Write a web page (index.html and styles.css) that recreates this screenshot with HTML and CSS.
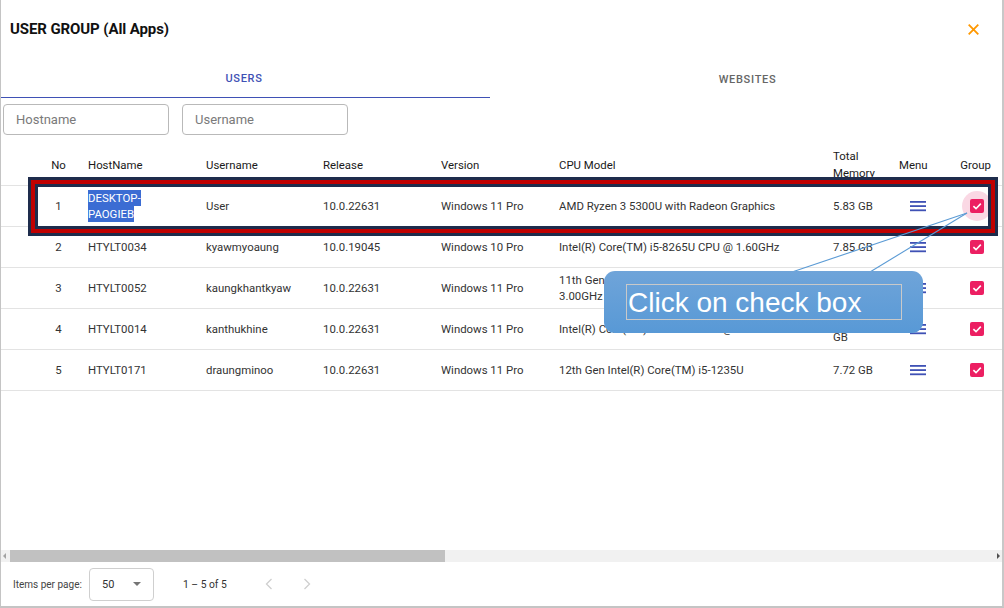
FILE: index.html
```html
<!DOCTYPE html>
<html lang="en">
<head>
<meta charset="utf-8">
<title>User Group</title>
<link rel="stylesheet" href="styles.css">
</head>
<body>
<div class="dialog">
  <header class="titlebar">
    <h1 class="title">USER GROUP (All Apps)</h1>
    <svg class="close" width="11" height="11" viewBox="0 0 11 11"><path d="M0.7 0.7L10.3 10.3M10.3 0.7L0.7 10.3"/></svg>
  </header>

  <nav class="tabs">
    <div class="tab tab-active">USERS</div>
    <div class="tab">WEBSITES</div>
  </nav>

  <div class="filters">
    <input class="field" placeholder="Hostname">
    <input class="field" placeholder="Username">
  </div>

  <div class="table">
    <div class="thead">
      <div class="c-no">No</div>
      <div class="c-host">HostName</div>
      <div>Username</div>
      <div>Release</div>
      <div>Version</div>
      <div>CPU Model</div>
      <div class="c-mem">Total Memory</div>
      <div class="c-menu-h">Menu</div>
      <div class="c-group-h">Group</div>
    </div>

    <div class="row">
      <div class="c-no">1</div>
      <div class="c-host"><span class="sel">DESKTOP-PAOGIEB</span></div>
      <div>User</div>
      <div>10.0.22631</div>
      <div>Windows 11 Pro</div>
      <div class="c-cpu">AMD Ryzen 3 5300U with Radeon Graphics</div>
      <div class="c-mem">5.83 GB</div>
      <div class="c-menu"><svg class="burger" width="16" height="12" viewBox="0 0 16 12"><rect x="0" y="1" width="16" height="1.8"/><rect x="0" y="5.2" width="16" height="1.8"/><rect x="0" y="9.4" width="16" height="1.8"/></svg></div>
      <div class="c-group"><span class="cbwrap focus"><span class="cb"><svg width="14" height="14" viewBox="0 0 14 14"><polyline points="3.4,7.2 6,9.7 10.8,4.6"/></svg></span></span></div>
    </div>

    <div class="row">
      <div class="c-no">2</div>
      <div class="c-host">HTYLT0034</div>
      <div>kyawmyoaung</div>
      <div>10.0.19045</div>
      <div>Windows 10 Pro</div>
      <div class="c-cpu">Intel(R) Core(TM) i5-8265U CPU @ 1.60GHz</div>
      <div class="c-mem">7.85 GB</div>
      <div class="c-menu"><svg class="burger" width="16" height="12" viewBox="0 0 16 12"><rect x="0" y="1" width="16" height="1.8"/><rect x="0" y="5.2" width="16" height="1.8"/><rect x="0" y="9.4" width="16" height="1.8"/></svg></div>
      <div class="c-group"><span class="cbwrap"><span class="cb"><svg width="14" height="14" viewBox="0 0 14 14"><polyline points="3.4,7.2 6,9.7 10.8,4.6"/></svg></span></span></div>
    </div>

    <div class="row">
      <div class="c-no">3</div>
      <div class="c-host">HTYLT0052</div>
      <div>kaungkhantkyaw</div>
      <div>10.0.22631</div>
      <div>Windows 11 Pro</div>
      <div class="c-cpu">11th Gen Intel(R) Core(TM) i5-1135G7 @ 3.00GHz</div>
      <div class="c-mem">7.71 GB</div>
      <div class="c-menu"><svg class="burger" width="16" height="12" viewBox="0 0 16 12"><rect x="0" y="1" width="16" height="1.8"/><rect x="0" y="5.2" width="16" height="1.8"/><rect x="0" y="9.4" width="16" height="1.8"/></svg></div>
      <div class="c-group"><span class="cbwrap"><span class="cb"><svg width="14" height="14" viewBox="0 0 14 14"><polyline points="3.4,7.2 6,9.7 10.8,4.6"/></svg></span></span></div>
    </div>

    <div class="row">
      <div class="c-no">4</div>
      <div class="c-host">HTYLT0014</div>
      <div>kanthukhine</div>
      <div>10.0.22631</div>
      <div>Windows 11 Pro</div>
      <div class="c-cpu">Intel(R) Core(TM) i7-8550U CPU @ 1.80GHz</div>
      <div class="c-mem">15.88 GB</div>
      <div class="c-menu"><svg class="burger" width="16" height="12" viewBox="0 0 16 12"><rect x="0" y="1" width="16" height="1.8"/><rect x="0" y="5.2" width="16" height="1.8"/><rect x="0" y="9.4" width="16" height="1.8"/></svg></div>
      <div class="c-group"><span class="cbwrap"><span class="cb"><svg width="14" height="14" viewBox="0 0 14 14"><polyline points="3.4,7.2 6,9.7 10.8,4.6"/></svg></span></span></div>
    </div>

    <div class="row">
      <div class="c-no">5</div>
      <div class="c-host">HTYLT0171</div>
      <div>draungminoo</div>
      <div>10.0.22631</div>
      <div>Windows 11 Pro</div>
      <div class="c-cpu">12th Gen Intel(R) Core(TM) i5-1235U</div>
      <div class="c-mem">7.72 GB</div>
      <div class="c-menu"><svg class="burger" width="16" height="12" viewBox="0 0 16 12"><rect x="0" y="1" width="16" height="1.8"/><rect x="0" y="5.2" width="16" height="1.8"/><rect x="0" y="9.4" width="16" height="1.8"/></svg></div>
      <div class="c-group"><span class="cbwrap"><span class="cb"><svg width="14" height="14" viewBox="0 0 14 14"><polyline points="3.4,7.2 6,9.7 10.8,4.6"/></svg></span></span></div>
    </div>
  </div>

  <div class="hscroll">
    <span class="sb-arrow sb-left"></span>
    <span class="sb-thumb"></span>
    <span class="sb-fill"></span>
    <span class="sb-arrow sb-right"></span>
  </div>

  <footer class="paginator">
    <span class="pg-label">Items per page:</span>
    <div class="pg-select"><span>50</span><span class="pg-caret"></span></div>
    <span class="pg-range">1 – 5 of 5</span>
    <svg class="pg-chev pg-prev" width="8" height="12" viewBox="0 0 8 12"><path d="M6.5 1L1.5 6L6.5 11"/></svg>
    <svg class="pg-chev pg-next" width="8" height="12" viewBox="0 0 8 12"><path d="M1.5 1L6.5 6L1.5 11"/></svg>
  </footer>

  <div class="hl-box"></div>
  <svg class="pointer" width="1004" height="608" viewBox="0 0 1004 608"><line x1="967" y1="213" x2="792" y2="272"/><line x1="967" y1="213" x2="870" y2="272"/></svg>
  <div class="callout"><div class="callout-text">Click on check box</div></div>
</div>
</body>
</html>
```

FILE: styles.css
```css
* { box-sizing: border-box; }

body {
  margin: 0;
  background: #fff;
  font-family: Roboto, "Noto Sans", sans-serif;
  color: #212121;
}

.dialog {
  position: relative;
  width: 1004px;
  height: 608px;
  display: flex;
  flex-direction: column;
  border-left: 1px solid #c4c4c4;
  border-right: 2px solid #c8c8c8;
  border-bottom: 2px solid #c4c4c4;
  background: #fff;
  overflow: hidden;
}

/* title */
.titlebar {
  height: 60px;
  flex: none;
  display: flex;
  align-items: center;
  justify-content: space-between;
  padding: 0 23px 2px 9px;
}
.title {
  margin: 0;
  font-size: 15px;
  font-weight: 700;
  color: #111;
  letter-spacing: -0.1px;
}
.close path { stroke: #ff9800; stroke-width: 1.8; fill: none; }

/* tabs */
.tabs {
  height: 38px;
  flex: none;
  display: flex;
}
.tab {
  display: flex;
  align-items: center;
  justify-content: center;
  flex: 1;
  font-size: 11px;
  font-weight: 500;
  letter-spacing: 0.7px;
  color: #666;
  padding-left: 3px;
}
.tab-active {
  flex: none;
  width: 489px;
  color: #3f51b5;
  border-bottom: 1px solid #3f51b5;
  padding-left: 0;
  padding-right: 3px;
}

/* filters */
.filters {
  flex: none;
  display: flex;
  gap: 13px;
  padding: 6px 0 0 2px;
}
.field {
  width: 166px;
  height: 31px;
  border: 1px solid #b9b9b9;
  border-radius: 4px;
  padding: 0 12px;
  font-family: Roboto, sans-serif;
  font-size: 13px;
  color: #333;
  outline: none;
}
.field::placeholder { color: #7a7a7a; }

/* table */
.table {
  flex: 1;
  margin-top: 10px;
  font-size: 11.4px;
}
.thead, .row {
  display: grid;
  grid-template-columns: 44px 126px 117px 118px 118px 274px 58px 54px 57px;
  padding-left: 35px;
  align-items: center;
  border-bottom: 1px solid #e3e3e3;
}
.thead {
  height: 41px;
  color: #1a1a1a;
  line-height: 17px;
}
.row {
  height: 41px;
  color: #333;
  line-height: 16px;
}
.c-no { text-align: center; padding-left: 1px; }
.c-host { padding-left: 8px; }
.row .c-host { max-width: 100px; }
.c-cpu { max-width: 235px; }
.row .c-mem { max-width: 44px; }
.thead .c-mem { max-width: 46px; }
.c-menu-h { padding-left: 8px; }
.c-group-h { text-align: right; padding-right: 11px; }

.sel {
  background: #3b6cd3;
  color: #fff;
  padding: 1px 0;
  -webkit-box-decoration-break: clone;
  box-decoration-break: clone;
}

.c-menu {
  display: flex;
  justify-content: center;
}
.burger rect { fill: #3f51b5; }

.c-group {
  display: flex;
  justify-content: flex-end;
  padding-right: 10px;
}
.cbwrap {
  width: 30px;
  height: 30px;
  border-radius: 50%;
  display: flex;
  align-items: center;
  justify-content: center;
}
.cbwrap.focus { background: #fad8e4; }
.cb {
  width: 14px;
  height: 14px;
  border-radius: 2px;
  background: #ec1f62;
  display: block;
}
.cb svg { display: block; }
.cb polyline { fill: none; stroke: #fff; stroke-width: 1.6; }

/* horizontal scrollbar */
.hscroll {
  flex: none;
  height: 12px;
  display: flex;
  align-items: stretch;
  background: #f1f1f1;
}
.sb-arrow {
  width: 9px;
  flex: none;
  position: relative;
}
.sb-left::after, .sb-right::after {
  content: "";
  position: absolute;
  top: 3px;
  border-top: 3px solid transparent;
  border-bottom: 3px solid transparent;
}
.sb-left::after { left: 2px; border-right: 3px solid #a3a3a3; }
.sb-right::after { right: 2px; border-left: 3px solid #505050; }
.sb-thumb {
  width: 435px;
  flex: none;
  background: #c1c1c1;
}
.sb-fill { flex: 1; }

/* paginator */
.paginator {
  flex: none;
  height: 44px;
  display: flex;
  align-items: center;
  padding-left: 12px;
  font-size: 10px;
  color: #444;
}
.pg-label { width: 76px; }
.pg-select {
  width: 65px;
  height: 33px;
  border: 1px solid #cfcfcf;
  border-radius: 4px;
  display: flex;
  align-items: center;
  justify-content: space-between;
  padding: 0 12px 0 12px;
  font-size: 11px;
  color: #333;
}
.pg-caret {
  width: 0;
  height: 0;
  border-left: 4px solid transparent;
  border-right: 4px solid transparent;
  border-top: 4px solid #757575;
}
.pg-range {
  margin-left: 29px;
  font-size: 10.3px;
  color: #333;
}
.pg-chev path { fill: none; stroke: #cfcfcf; stroke-width: 1.3; }
.pg-prev { margin-left: 38px; }
.pg-next { margin-left: 30px; }

/* annotation overlays */
.hl-box {
  position: absolute;
  left: 37px;
  top: 187px;
  width: 950px;
  height: 39px;
  box-shadow: 0 0 0 3px #1e2c4c, 0 0 0 7px #c00000, 0 0 0 10px #1e2c4c;
  pointer-events: none;
}
.pointer {
  position: absolute;
  left: -1px;
  top: 0;
  pointer-events: none;
}
.pointer line { stroke: #5b9bd5; stroke-width: 1.1; }

.callout {
  position: absolute;
  left: 603px;
  top: 271px;
  width: 319px;
  height: 62px;
  border-radius: 11px;
  background: linear-gradient(#6fa4d9, #5899d6);
  padding: 13px 21px 0 22px;
}
.callout-text {
  height: 36px;
  border: 1px solid #c9c9c9;
  font-family: "Liberation Sans", Arial, sans-serif;
  font-size: 28px;
  line-height: 36px;
  color: #fff;
  padding-left: 1px;
  white-space: nowrap;
}
```
